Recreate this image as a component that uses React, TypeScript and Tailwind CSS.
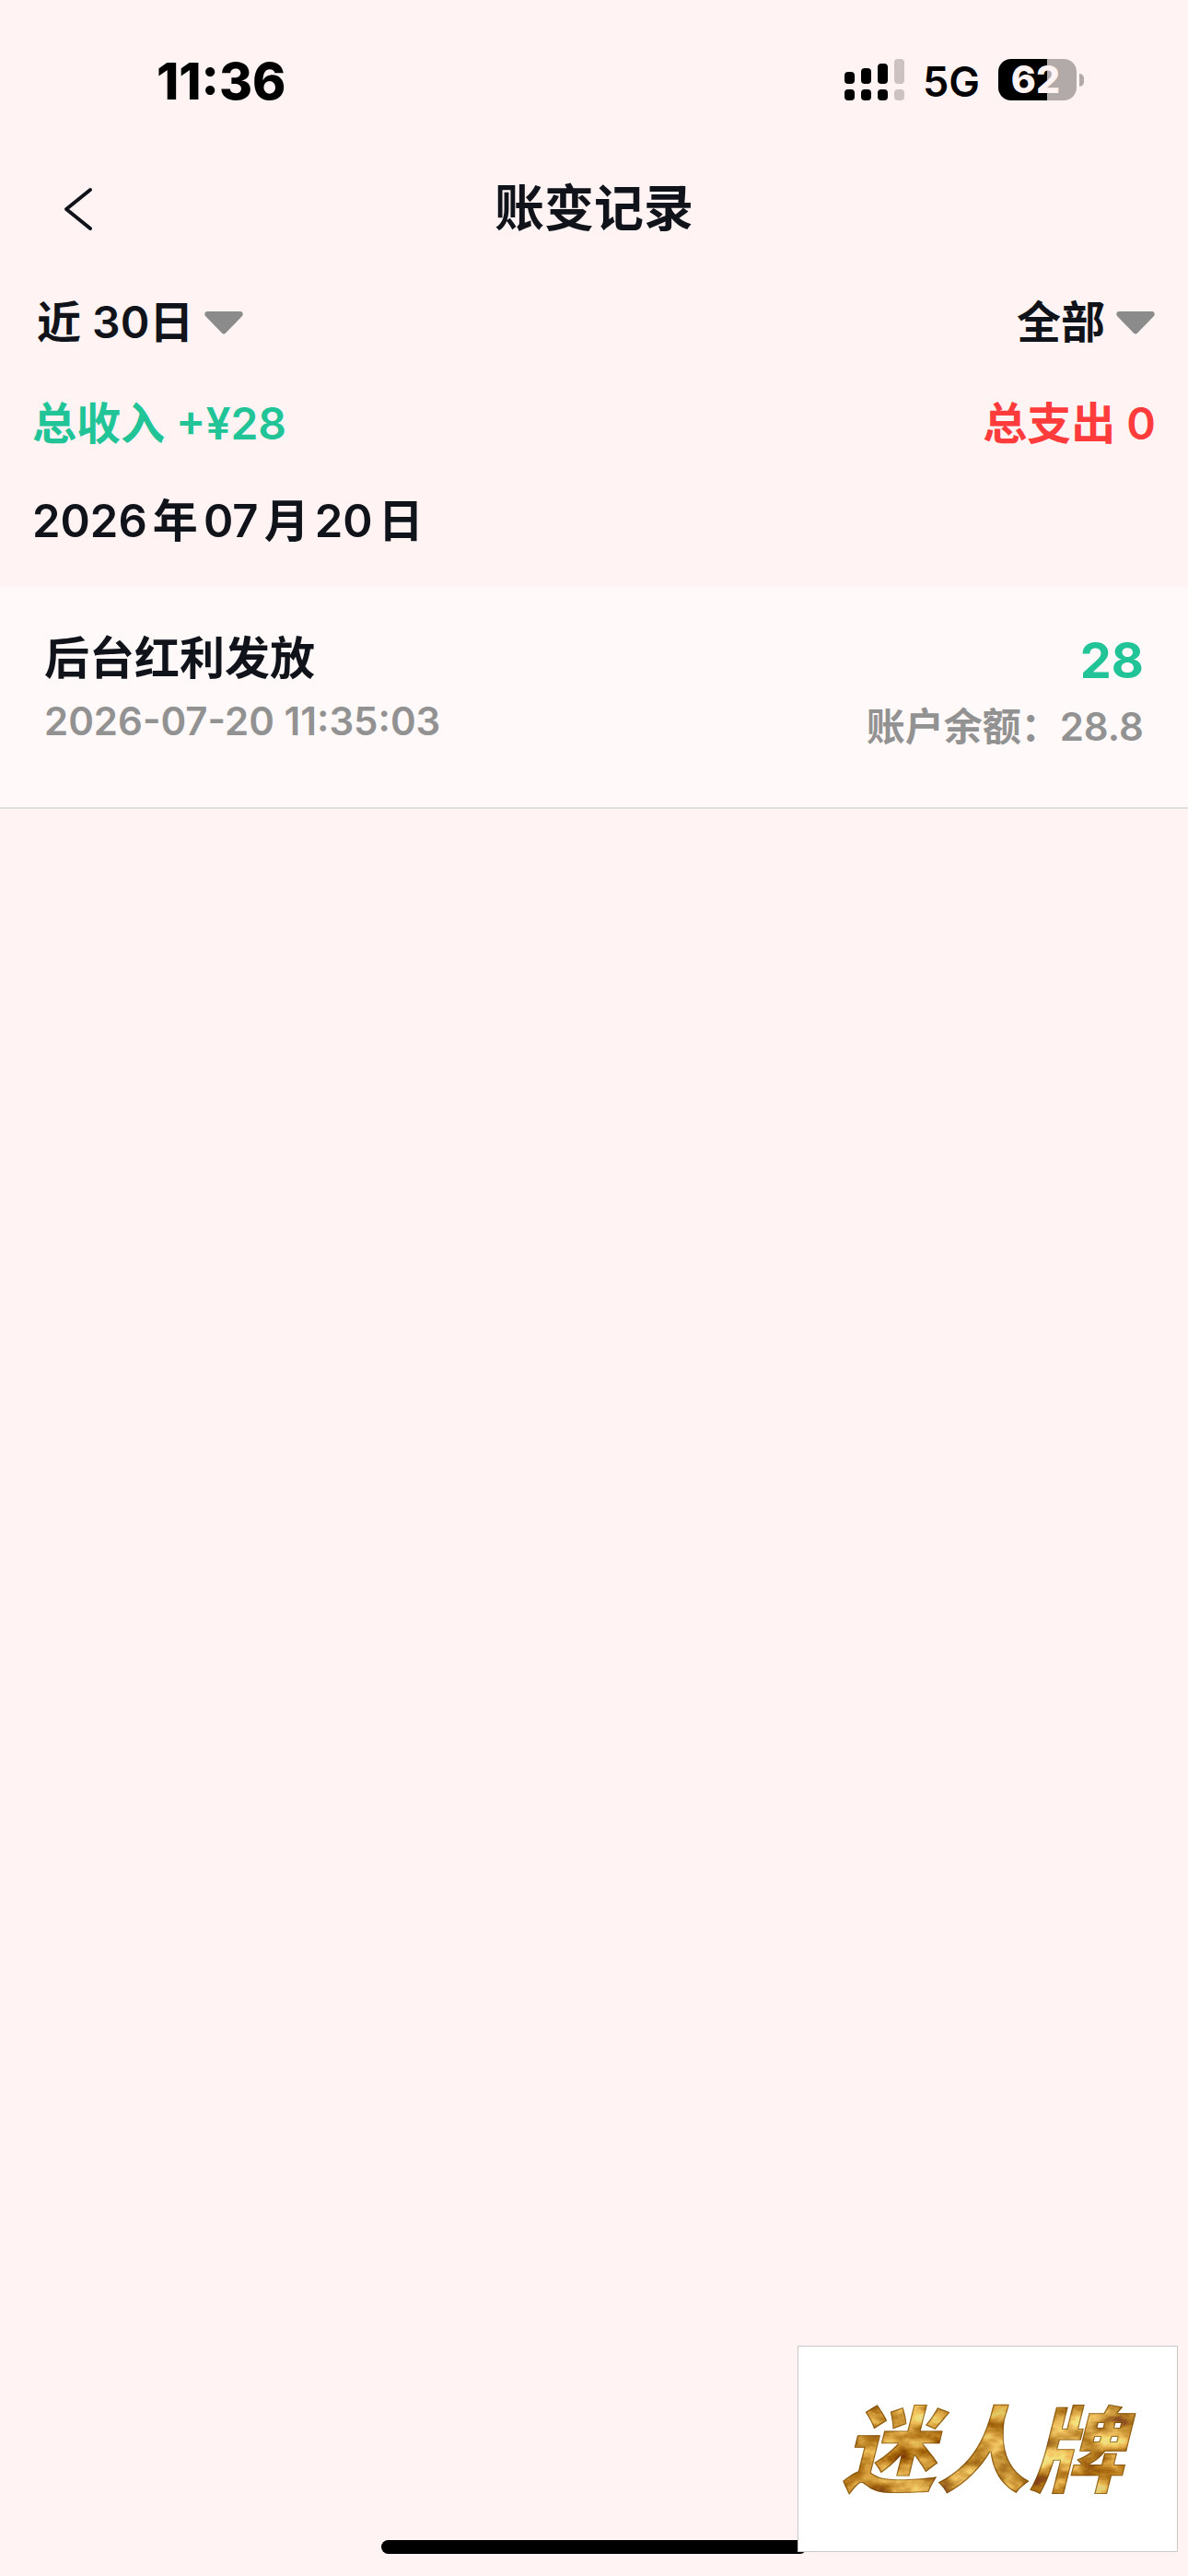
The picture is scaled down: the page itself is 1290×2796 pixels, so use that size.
import React from 'react';

const periods = ['近 30日'];
const categories = ['全部'];

const records = [
  { title: '后台红利发放', time: '2026-07-20 11:35:03', amount: '28', balance: '28.8' },
];

const signalBars = [
  { x: 0, top: 14, on: true },
  { x: 18, top: 10, on: true },
  { x: 36, top: 5, on: true },
  { x: 54, top: 0, on: false },
];

const StatusBar: React.FC = () => (
  <div className="flex h-44 items-center justify-between pl-[170px] pr-[113px] text-black">
    <span className="text-[55px] leading-none font-extrabold">11:36</span>
    <div className="flex items-center pb-[3px]">
      <svg width="65" height="45" viewBox="0 0 65 45" aria-hidden="true">
        {signalBars.map((bar) => (
          <g key={bar.x} fill={bar.on ? '#000000' : '#cdc2c2'}>
            <rect x={bar.x} y={bar.top} width="11" height={27 - bar.top} rx="4" />
            <rect x={bar.x} y="33" width="11" height="12" rx="4" />
          </g>
        ))}
      </svg>
      <span className="ml-5 pt-1 text-[45px] leading-none font-semibold">5G</span>
      <div className="ml-5 flex items-center gap-[3px]">
        <div className="flex h-[45px] w-[85px] items-center justify-center rounded-[14px] bg-linear-to-r from-black from-62% to-[#b2a9a9] to-62% pr-1 text-[41px] leading-none font-extrabold text-[#fff3f3]">
          62
        </div>
        <div className="h-[14px] w-[5px] rounded-r-full bg-[#b2a9a9]" />
      </div>
    </div>
  </div>
);

const FilterSelect: React.FC<{ label: string; options: string[] }> = ({ label, options }) => (
  <label className="flex items-center gap-3">
    <select
      aria-label={label}
      className="field-sizing-content appearance-none bg-transparent text-[48px] leading-[72px] font-semibold"
    >
      {options.map((option) => (
        <option key={option}>{option}</option>
      ))}
    </select>
    <svg width="42" height="25" viewBox="0 0 42 25" fill="#8b8b8b" aria-hidden="true">
      <path d="M3 0H39C41.500 0 42.500 3 41 5L24 22.500C22 25 20 25 18 22.500L1 5C-.5 3 .5 0 3 0Z" />
    </svg>
  </label>
);

const BrandLogo: React.FC = () => (
  <div className="absolute right-[11px] bottom-[26px] flex h-56 w-[413px] items-center justify-center border border-[#c8c8c8] bg-white">
    <svg width="400" height="160" viewBox="0 0 400 160">
      <defs>
        <linearGradient id="gold" x1="0" y1="0" x2="1" y2="1">
          <stop offset="0" stopColor="#b8780f" />
          <stop offset="0.25" stopColor="#e3b44a" />
          <stop offset="0.4" stopColor="#b3730e" />
          <stop offset="0.6" stopColor="#e8c260" />
          <stop offset="0.8" stopColor="#c98c22" />
          <stop offset="1" stopColor="#a3640c" />
        </linearGradient>
        <filter id="foil" x="-0.1" y="-0.1" width="1.2" height="1.2" colorInterpolationFilters="sRGB">
          <feTurbulence type="fractalNoise" baseFrequency="0.03 0.05" numOctaves="5" seed="8" />
          <feColorMatrix
            values="1.5 0 0 0 0.06
                    1.7 0 0 0 -0.26
                    1.5 0 0 0 -0.52
                    0 0 0 0 1"
            result="noise"
          />
          <feComposite in="noise" in2="SourceGraphic" operator="arithmetic" k1="0" k2="0.6" k3="0.4" k4="0" />
          <feComposite in2="SourceAlpha" operator="in" result="face" />
          <feMorphology in="SourceAlpha" operator="erode" radius="1" result="inner" />
          <feFlood floodColor="#7a4a08" floodOpacity="0.7" />
          <feComposite in2="SourceAlpha" operator="in" />
          <feComposite in2="inner" operator="out" result="edge" />
          <feMerge>
            <feMergeNode in="face" />
            <feMergeNode in="edge" />
          </feMerge>
        </filter>
      </defs>
      <text
        x="194"
        y="119"
        textAnchor="middle"
        fill="url(#gold)"
        filter="url(#foil)"
        className="font-['Noto_Sans_CJK_SC',sans-serif] text-[102px] font-black italic"
      >
        迷人牌
      </text>
    </svg>
  </div>
);

const App: React.FC = () => {
  return (
    <div
      lang="zh-CN"
      className="relative flex min-h-screen flex-col bg-[#fff3f3] font-[Inter,'Noto_Sans_CJK_SC',sans-serif] text-[#10131a]"
    >
      <StatusBar />

      {/* Header */}
      <header className="grid h-[102px] grid-cols-[1fr_auto_1fr] items-center px-[68px]">
        <button type="button" aria-label="返回" className="justify-self-start">
          <svg width="34" height="50" viewBox="0 0 34 50" fill="none" stroke="#10131a" strokeWidth="4" strokeLinecap="round" strokeLinejoin="round">
            <path d="M30 4L4 25L30 46" />
          </svg>
        </button>
        <h1 className="text-[54px] leading-none font-semibold">账变记录</h1>
      </header>

      {/* Filters */}
      <div className="flex h-36 items-center justify-between pr-9 pl-10">
        <FilterSelect label="时间" options={periods} />
        <FilterSelect label="类型" options={categories} />
      </div>

      {/* Totals */}
      <div className="flex h-[76px] items-center justify-between px-[35px] text-[48px] leading-none font-semibold">
        <p className="text-[#20c497]">总收入 +¥28</p>
        <p className="text-[#ff3b3b]">总支出 0</p>
      </div>

      <h2 className="flex h-[139px] items-center px-[35px] pb-1 text-[49px] leading-none font-semibold [text-autospace:normal]">
        2026年07月20日
      </h2>

      {/* Records */}
      <ul>
        {records.map((record) => (
          <li
            key={record.time}
            className="flex justify-between border-b-2 border-[#dfdfdf] bg-[#fff9f9] px-12 pt-11 pb-[51px]"
          >
            <div>
              <h3 className="text-[49px] leading-[68px] font-semibold">{record.title}</h3>
              <p className="text-[42px] leading-[68px] font-semibold text-[#929292]">{record.time}</p>
            </div>
            <div className="text-right">
              <p className="text-[54px] leading-[72px] font-bold text-[#20c497]">{record.amount}</p>
              <p className="text-[42px] leading-[72px] font-semibold text-[#929292]">账户余额：{record.balance}</p>
            </div>
          </li>
        ))}
      </ul>

      <div className="mx-auto mt-auto mb-6 h-[15px] w-[462px] rounded-full bg-black" />
      <BrandLogo />
    </div>
  );
};

export default App;
